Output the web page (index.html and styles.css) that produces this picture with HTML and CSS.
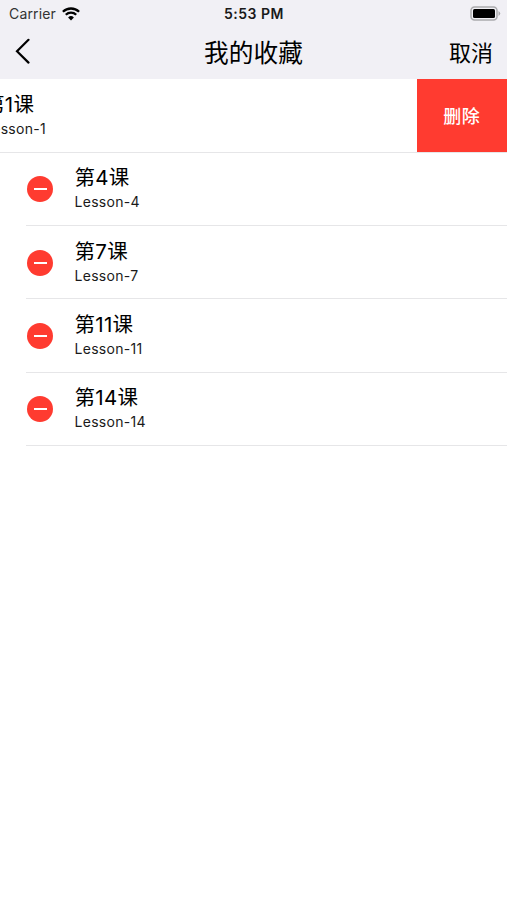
FILE: index.html
```html
<!DOCTYPE html>
<html lang="zh-CN">
<head>
<meta charset="utf-8">
<title>我的收藏</title>
<link rel="stylesheet" href="styles.css">
</head>
<body>
<header class="top">
  <div class="status">
    <div class="carrier"><span>Carrier</span>
      <svg class="wifi" width="18" height="14" viewBox="0 0 18 14"><path d="M.9 4.8a11.6 11.6 0 0 1 16.2 0M3.8 7.8a7.4 7.4 0 0 1 10.4 0" fill="none" stroke="#000" stroke-width="2.3"/><path d="M9 13.5L6.1 10.5a4.2 4.2 0 0 1 5.8 0z"/></svg>
    </div>
    <div class="time">5:53 PM</div>
    <svg class="battery" width="31" height="15" viewBox="0 0 31 15"><rect x="1" y="1" width="26" height="13" rx="3.5" fill="none" stroke="#aaaaad" stroke-width="1.5"/><rect x="3" y="3" width="22" height="9" rx="1.5"/><path d="M28.5 5q3.5 2.5 0 5z" fill="#aaaaad"/></svg>
  </div>
  <nav class="nav">
    <svg class="back" width="16" height="26" viewBox="0 0 16 26"><path d="M14.5 1.8L3 13.2 14.5 24.6" fill="none" stroke="#000" stroke-width="2.2" stroke-linecap="round"/></svg>
    <h1 class="title">我的收藏</h1>
    <span class="cancel">取消</span>
  </nav>
</header>
<main>
  <section class="row swiped">
    <div class="text"><div class="name">第1课</div><div class="sub">Lesson-1</div></div>
    <div class="delete">删除</div>
  </section>
  <section class="row"><span class="minus"></span><div class="text"><div class="name">第4课</div><div class="sub">Lesson-4</div></div></section>
  <section class="row"><span class="minus"></span><div class="text"><div class="name">第7课</div><div class="sub">Lesson-7</div></div></section>
  <section class="row"><span class="minus"></span><div class="text"><div class="name">第11课</div><div class="sub">Lesson-11</div></div></section>
  <section class="row"><span class="minus"></span><div class="text"><div class="name">第14课</div><div class="sub">Lesson-14</div></div></section>
</main>
</body>
</html>
```
FILE: styles.css
```css
* { box-sizing: border-box; }
body { margin: 0; width: 507px; height: 900px; overflow: hidden; background: #fff; color: #000; font-family: Inter, "Noto Sans CJK SC", sans-serif; }
.top { height: 79px; background: #f1f0f5; }
.status { height: 27px; display: grid; grid-template-columns: 1fr auto 1fr; align-items: center; padding: 0 6px 0 9px; font-size: 14px; line-height: 27px; }
.carrier { display: flex; align-items: center; gap: 6px; color: #333; letter-spacing: .15px; }
.time { font-weight: 600; letter-spacing: .5px; margin-left: -2px; color: #1a1a1a; }
.battery { justify-self: end; }
.nav { height: 52px; display: grid; grid-template-columns: 1fr auto 1fr; align-items: center; padding: 0 14px; }
.back { margin-bottom: 4px; }
.title { margin: 0; font-size: 24.7px; line-height: 50px; font-weight: 400; }
.cancel { justify-self: end; font-size: 22px; line-height: 50px; }
.row { height: 73.3px; margin-left: 26px; border-bottom: 1px solid #e6e6e8; display: flex; align-items: center; }
.minus { width: 26px; height: 26px; margin: .8px 22px 0 1px; border-radius: 50%; background: #ff3b30; display: grid; place-items: center; }
.minus::after { content: ""; width: 13px; height: 2px; background: #fff; }
.text { margin: -1px 0 0 -.5px; }
.name { font-size: 20.5px; line-height: 28px; letter-spacing: .3px; }
.sub { font-size: 14px; line-height: 20px; letter-spacing: .3px; color: #1a1a1a; }
.swiped { height: 73.7px; margin-left: 0; justify-content: space-between; }
.swiped .text { margin-left: -16px; }
.delete { width: 90.5px; height: 100%; background: #ff3b30; color: #fff; font-size: 18px; font-weight: 500; letter-spacing: .4px; line-height: 26px; padding-top: 3px; display: grid; place-items: center; }
```
